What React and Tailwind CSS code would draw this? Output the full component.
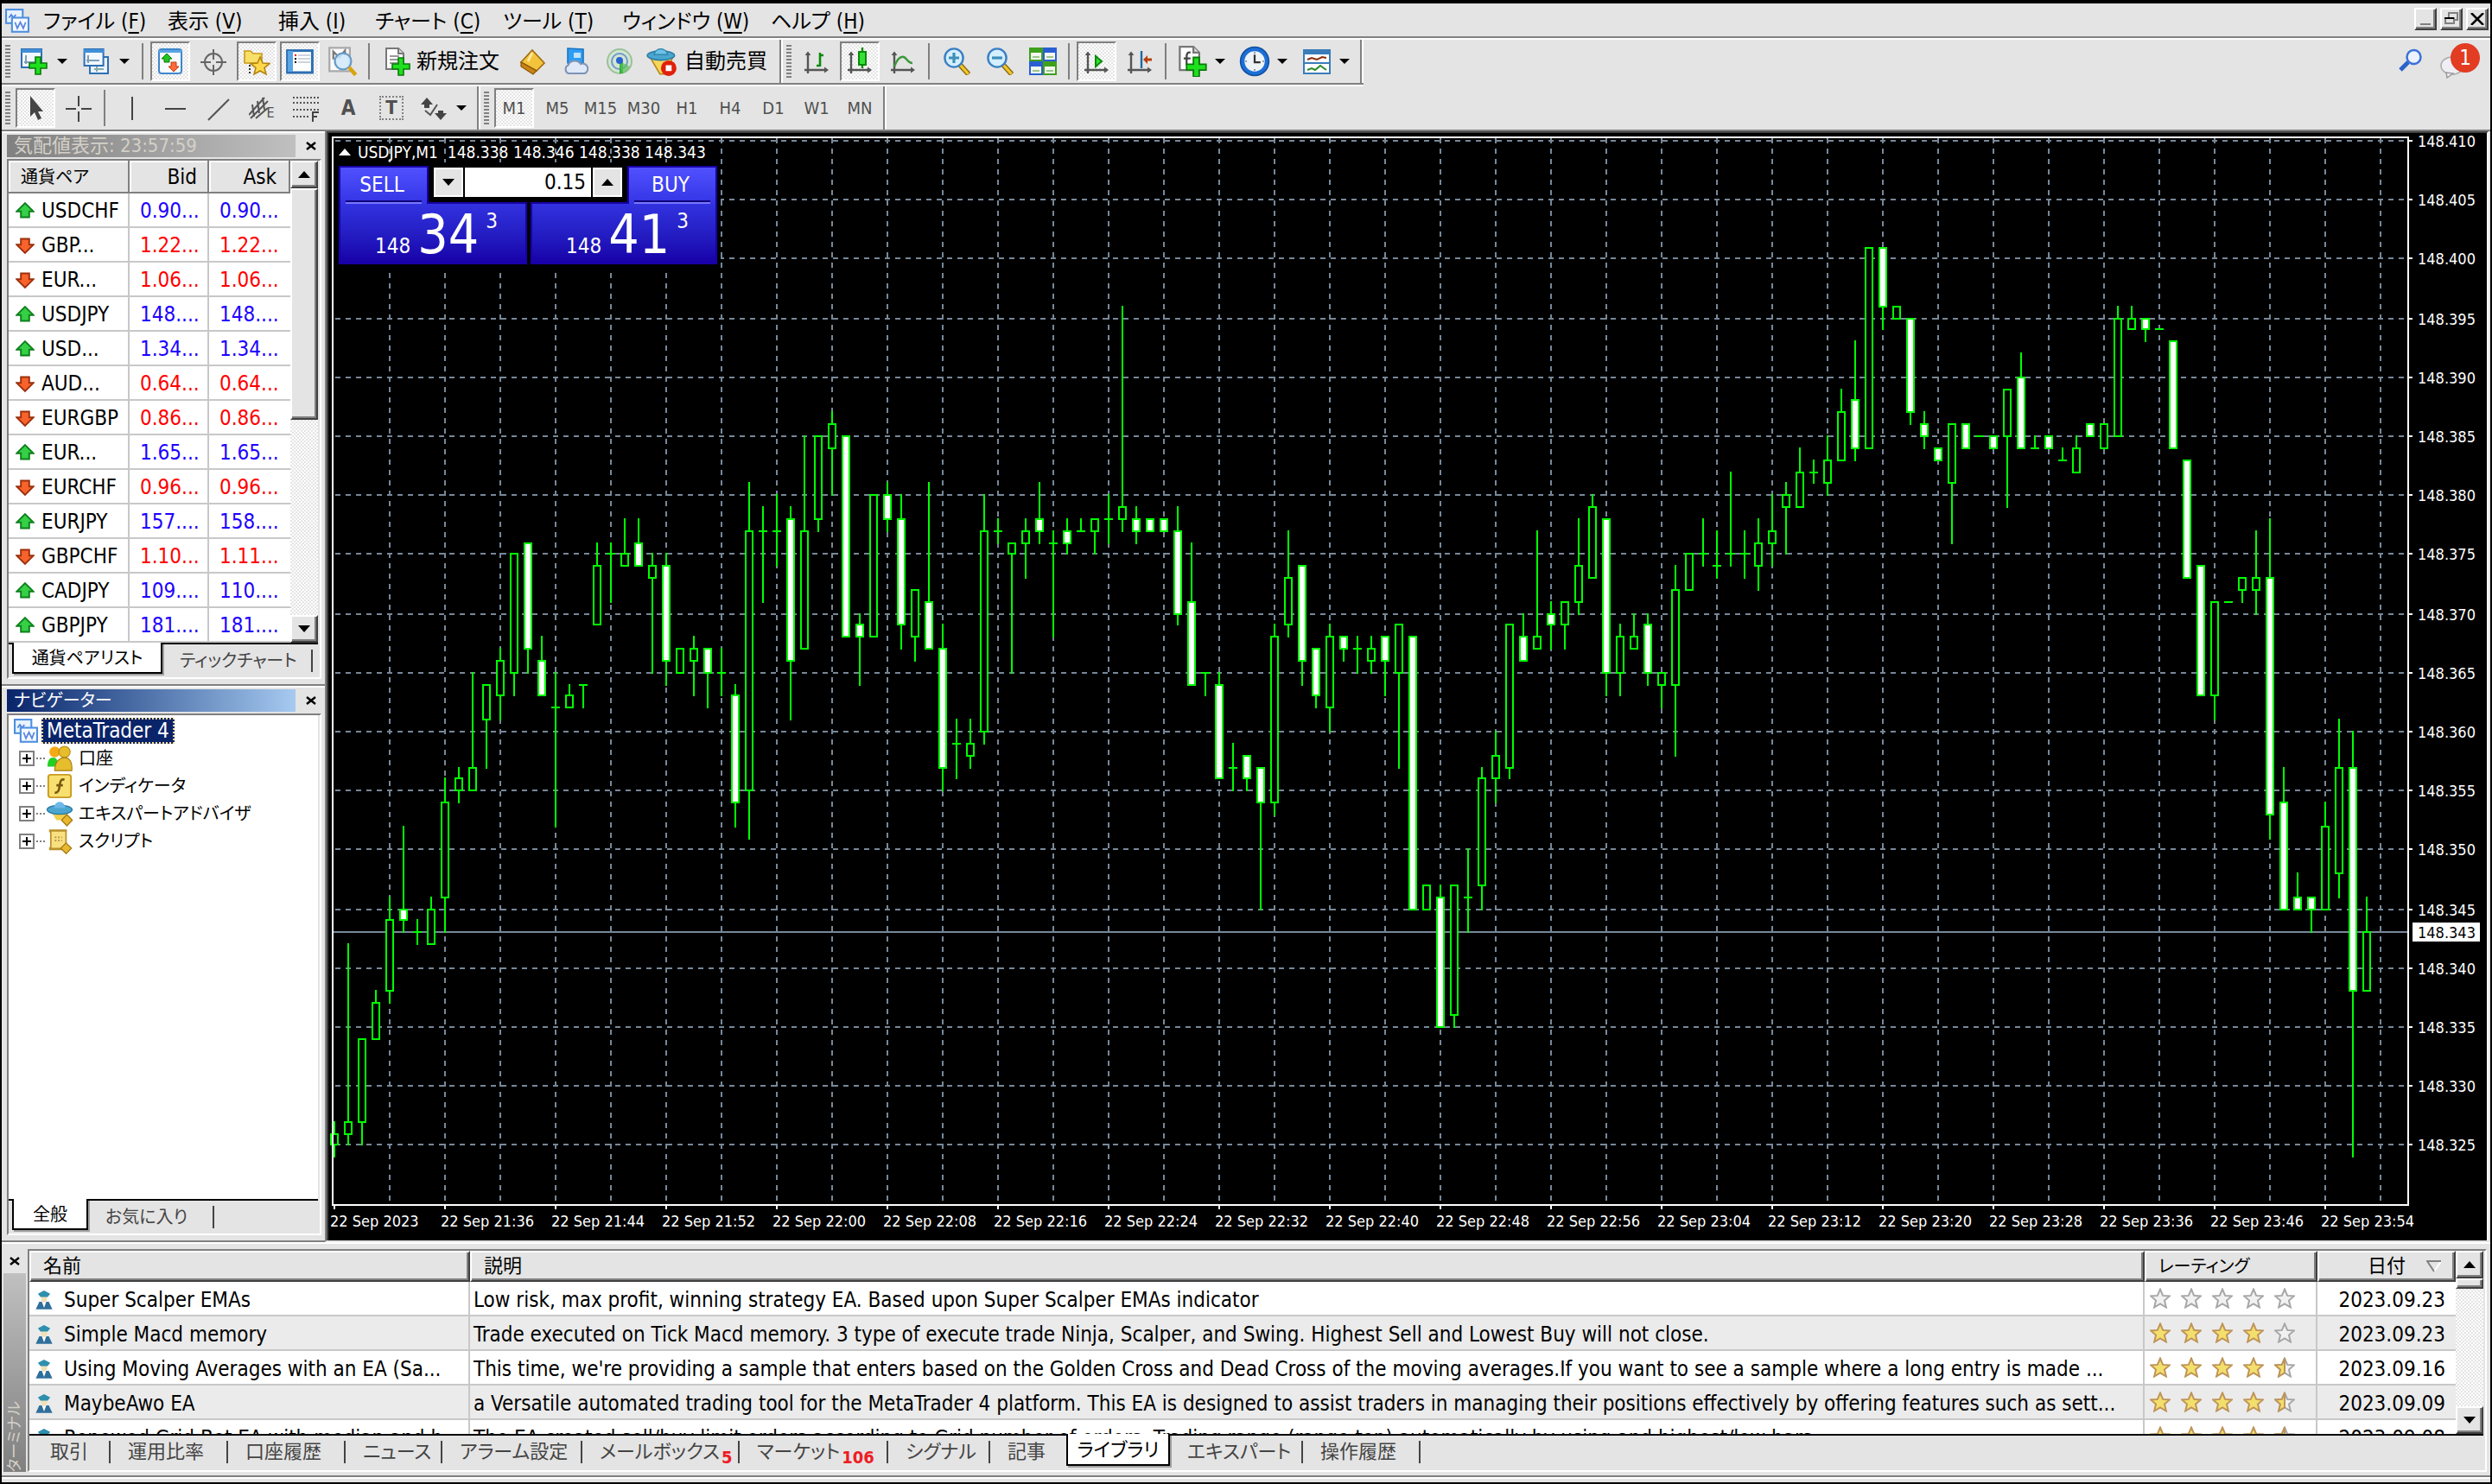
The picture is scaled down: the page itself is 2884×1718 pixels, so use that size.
import React, { useState } from 'react';

const menus = [
  { label: 'ファイル', hotKey: 'F', width: 'w-[144px]' },
  { label: '表示', hotKey: 'V', width: 'w-[128px]' },
  { label: '挿入', hotKey: 'I', width: 'w-[112px]' },
  { label: 'チャート', hotKey: 'C', width: 'w-[148px]' },
  { label: 'ツール', hotKey: 'T', width: 'w-[138px]' },
  { label: 'ウィンドウ', hotKey: 'W', width: 'w-[172px]' },
  { label: 'ヘルプ', hotKey: 'H', width: 'w-[120px]' },
];

const periods = ['M1', 'M5', 'M15', 'M30', 'H1', 'H4', 'D1', 'W1', 'MN'];

const symbols = [
  { name: 'USDCHF', bid: '0.90...', ask: '0.90...', up: true },
  { name: 'GBP...', bid: '1.22...', ask: '1.22...', up: false },
  { name: 'EUR...', bid: '1.06...', ask: '1.06...', up: false },
  { name: 'USDJPY', bid: '148....', ask: '148....', up: true },
  { name: 'USD...', bid: '1.34...', ask: '1.34...', up: true },
  { name: 'AUD...', bid: '0.64...', ask: '0.64...', up: false },
  { name: 'EURGBP', bid: '0.86...', ask: '0.86...', up: false },
  { name: 'EUR...', bid: '1.65...', ask: '1.65...', up: true },
  { name: 'EURCHF', bid: '0.96...', ask: '0.96...', up: false },
  { name: 'EURJPY', bid: '157....', ask: '158....', up: true },
  { name: 'GBPCHF', bid: '1.10...', ask: '1.11...', up: false },
  { name: 'CADJPY', bid: '109....', ask: '110....', up: true },
  { name: 'GBPJPY', bid: '181....', ask: '181....', up: true },
];

const library = [
  { name: 'Super Scalper EMAs', text: 'Low risk, max profit, winning strategy EA. Based upon Super Scalper EMAs indicator', stars: 0, date: '2023.09.23' },
  { name: 'Simple Macd memory', text: 'Trade executed on Tick Macd memory. 3 type of execute trade Ninja, Scalper, and Swing. Highest Sell and Lowest Buy will not close.', stars: 4, date: '2023.09.23' },
  { name: 'Using Moving Averages with an EA (Sa...', text: "This time, we're providing a sample that enters based on the Golden Cross and Dead Cross of the moving averages.If you want to see a sample where a long entry is made ...", stars: 4.5, date: '2023.09.16' },
  { name: 'MaybeAwo EA', text: 'a Versatile automated trading tool for the MetaTrader 4 platform. This EA is designed to assist traders in managing their positions effectively by offering features such as sett...', stars: 4.5, date: '2023.09.09' },
  { name: 'Renewed Grid Bot EA with median and h...', text: 'The EA created sell/buy limit orders according to Grid number of orders. Trading range (range top) automatically by using and highest/low bars ...', stars: 4.5, date: '2023.09.08' },
];

const terminalTabs = [
  { label: '取引', width: 'w-[90px] ml-1' },
  { label: '運用比率', width: 'w-[136px]' },
  { label: '口座履歴', width: 'w-[136px]' },
  { label: 'ニュース', width: 'w-[112px]' },
  { label: 'アラーム設定', width: 'w-[162px]' },
  { label: 'メールボックス', width: 'w-[182px]', count: 5 },
  { label: 'マーケット', width: 'w-[172px]', count: 106 },
  { label: 'シグナル', width: 'w-[118px]' },
  { label: '記事', width: 'w-[88px]' },
  { label: 'ライブラリ', width: 'w-[120px]' },
  { label: 'エキスパート', width: 'w-[154px]' },
  { label: '操作履歴', width: 'w-[136px]' },
];

// open, high, low, close in points above 148.000
const candles = [
  [325, 327, 324, 326], [326, 342, 325, 327], [327, 334, 325, 334], [334, 338, 334, 337],
  [338, 346, 337, 344], [345, 352, 343, 344], [343, 344, 342, 343], [342, 346, 342, 345],
  [346, 356, 343, 354], [355, 357, 354, 356], [355, 365, 355, 357], [361, 364, 357, 364],
  [363, 367, 361, 366], [365, 375, 363, 375], [376, 376, 365, 367], [366, 368, 363, 363],
  [362, 365, 352, 362], [362, 364, 362, 363], [364, 364, 362, 364], [369, 376, 369, 374],
  [375, 376, 371, 375], [374, 378, 374, 375], [376, 378, 374, 374], [373, 375, 365, 374],
  [374, 375, 364, 366], [365, 367, 365, 367], [366, 368, 363, 367], [367, 367, 362, 365],
  [365, 367, 363, 365], [363, 364, 352, 354], [355, 381, 351, 377], [377, 379, 371, 377],
  [377, 380, 374, 377], [378, 379, 361, 366], [367, 385, 367, 377], [378, 385, 377, 385],
  [384, 387, 380, 386], [385, 385, 368, 368], [369, 370, 364, 368], [368, 380, 368, 380],
  [380, 381, 377, 378], [378, 380, 367, 369], [368, 372, 366, 372], [371, 381, 367, 367],
  [367, 369, 355, 357], [359, 361, 356, 359], [358, 361, 357, 359], [360, 380, 359, 377],
  [377, 378, 376, 377], [375, 376, 365, 376], [376, 378, 373, 377], [378, 381, 376, 377],
  [376, 377, 368, 376], [377, 378, 375, 376], [377, 378, 377, 377], [377, 378, 375, 378],
  [378, 380, 376, 378], [378, 396, 377, 379], [378, 379, 376, 377], [378, 378, 377, 377],
  [378, 378, 377, 377], [377, 379, 369, 370], [371, 376, 364, 364], [365, 365, 363, 365],
  [364, 365, 356, 356], [357, 359, 355, 357], [358, 358, 355, 356], [357, 357, 345, 354],
  [354, 369, 353, 368], [369, 377, 368, 373], [374, 374, 364, 366], [367, 367, 362, 363],
  [362, 369, 360, 368], [368, 368, 366, 367], [367, 368, 365, 367], [366, 368, 365, 367],
  [368, 368, 363, 366], [365, 369, 357, 369], [368, 368, 345, 345], [345, 347, 345, 347],
  [346, 347, 335, 335], [336, 347, 335, 347], [346, 350, 343, 346], [347, 357, 345, 356],
  [356, 360, 354, 358], [357, 369, 356, 369], [368, 370, 366, 366], [367, 377, 367, 368],
  [370, 371, 367, 369], [369, 371, 367, 371], [371, 378, 370, 374], [373, 380, 373, 379],
  [378, 378, 363, 365], [365, 369, 363, 368], [367, 370, 367, 368], [369, 370, 364, 365],
  [364, 365, 362, 365], [364, 374, 358, 372], [372, 375, 372, 375], [375, 378, 374, 375],
  [374, 377, 373, 374], [375, 382, 374, 375], [375, 377, 373, 375], [374, 378, 372, 376],
  [376, 380, 374, 377], [379, 381, 375, 380], [379, 384, 379, 382], [382, 383, 381, 382],
  [381, 385, 380, 383], [383, 389, 383, 387], [388, 393, 383, 384], [384, 401, 384, 401],
  [401, 401, 394, 396], [395, 396, 395, 396], [395, 395, 386, 387], [386, 387, 384, 385],
  [384, 384, 383, 383], [381, 386, 376, 386], [386, 386, 384, 384], [385, 385, 385, 385],
  [385, 385, 384, 384], [385, 389, 379, 389], [390, 392, 384, 384], [384, 385, 384, 384],
  [385, 385, 384, 384], [383, 384, 383, 383], [382, 385, 382, 384], [386, 386, 385, 385],
  [384, 386, 384, 386], [385, 396, 385, 395], [394, 396, 394, 395], [395, 395, 393, 394],
  [394, 394, 394, 394], [393, 393, 384, 384], [383, 383, 373, 373], [374, 374, 363, 363],
  [363, 371, 361, 371], [371, 371, 371, 371], [372, 373, 371, 373], [372, 377, 370, 373],
  [373, 378, 351, 353], [354, 357, 345, 345], [346, 348, 345, 345], [346, 346, 343, 345],
  [345, 354, 345, 352], [348, 361, 346, 357], [357, 360, 324, 338], [338, 346, 338, 343],
];

const times = [
  '2023', '21:36', '21:44', '21:52', '22:00', '22:08', '22:16', '22:24', '22:32', '22:40',
  '22:48', '22:56', '23:04', '23:12', '23:20', '23:28', '23:36', '23:46', '23:54',
];

const prices = Array.from({ length: 18 }, (_, i) => 410 - i * 5);

const candleX = (i) => 7 + i * 16;
const priceY = (p) => 9 + Math.round((410 - p) * 6.84) * 2;

/* ---------- small drawings ---------- */

const Svg = ({ children, className = 'w-8 h-8' }) => (
  <svg viewBox="0 0 16 16" className={`${className} shrink-0`} aria-hidden="true">{children}</svg>
);

const Caret = ({ up, big }) => (
  <svg viewBox="0 0 12 6" preserveAspectRatio="none" className={`shrink-0 ${big ? 'w-[14px] h-2' : 'w-3 h-[6px]'}`} aria-hidden="true">
    <path d={up ? 'M0 6L6 0L12 6Z' : 'M0 0H12L6 6Z'} fill="#000" />
  </svg>
);

const Close = () => (
  <svg viewBox="0 0 12 10" className="w-3 h-[10px]" aria-hidden="true">
    <path d="M1 1L11 9M11 1L1 9" stroke="#000" strokeWidth="2.4" />
  </svg>
);

const Plus = ({ x = 5, y = 6 }) => (
  <path
    d={`M${x + 3.5} ${y}h3v3.5h3.5v3h-3.5v3.5h-3v-3.5h-3.5v-3h3.5z`}
    fill="#1ee01e" stroke="#0a7a0a" strokeWidth="0.8"
  />
);

const LogoIcon = () => (
  <Svg className="w-7 h-7">
    <rect x="0.6" y="0.6" width="11" height="9" fill="#e8f3ff" stroke="#4f8fe0" strokeWidth="1.2" />
    <path d="M2.5 6L4 4L5.5 6L7 4" stroke="#4f80e0" fill="none" />
    <rect x="4.5" y="6" width="10.9" height="9.3" fill="#f4faff" stroke="#4f8fe0" strokeWidth="1.2" />
    <path d="M6.5 9L8 13L10 9L12 13L13.5 9" stroke="#5b86e0" fill="none" />
  </Svg>
);

const Axes = ({ children }) => (
  <Svg>
    <path d="M3 15V3M1 13H14" stroke="#555" strokeWidth="1.2" fill="none" />
    <path d="M1.3 4.5L3 2.2L4.7 4.5ZM12.5 11.3L15 13L12.5 14.7Z" fill="#555" />
    {children}
  </Svg>
);

const NewChartIcon = () => (
  <Svg className="w-9 h-8">
    <rect x="0.5" y="1" width="11.5" height="10.5" fill="#f2f8ff" stroke="#2d6fb3" />
    <path d="M0.5 1H12V3H0.5Z" fill="#3f8fd8" />
    <path d="M3 4.5V9.5M2 8.5H9" stroke="#7f9fb8" />
    <Plus x={5} y={5.5} />
  </Svg>
);

const WindowsIcon = () => (
  <Svg className="w-9 h-8">
    <rect x="4" y="5.5" width="10.5" height="9.5" fill="#eaf3fb" stroke="#2d6fb3" />
    <path d="M6.5 12.5H12M8 10.5V14" stroke="#8aa" />
    <rect x="0.8" y="1" width="11" height="9.5" fill="#f2f8ff" stroke="#2d6fb3" />
    <path d="M0.5 1H12V3H0.5Z" fill="#3f8fd8" />
    <path d="M3 4.5V9M2 7.5H9.5" stroke="#7f9fb8" />
  </Svg>
);

const MarketWatchIcon = () => (
  <Svg>
    <rect x="1.5" y="1" width="13" height="14" rx="1.5" fill="#f7fbff" stroke="#3f86cc" />
    <path d="M1.5 1.5H14.5V3H1.5Z" fill="#5aa5e4" />
    <path d="M6 3.5L9 6.5H7.5V8.5H4.5V6.5H3Z" fill="#1fc41f" stroke="#0a7a0a" strokeWidth="0.5" />
    <path d="M10 14L7 11H8.5V8.5H11.5V11H13Z" fill="#ff6a3a" stroke="#c23a10" strokeWidth="0.5" />
  </Svg>
);

const TargetIcon = () => (
  <Svg>
    <circle cx="8" cy="8.5" r="5" fill="none" stroke="#666" />
    <path d="M8 1V7M8 10V16M0.5 8.5H6.5M9.5 8.5H15.5" stroke="#666" />
  </Svg>
);

const NavigatorIcon = () => (
  <Svg>
    <path d="M1 2H4.5L6 3.5H11V9H1Z" fill="#f8df6a" stroke="#c79a1c" strokeWidth="0.8" />
    <path d="M4 10V16" stroke="#333" strokeDasharray="1 1" />
    <path d="M10 5.5L11.5 9L15.5 9.3L12.5 11.8L13.5 15.5L10 13.5L6.5 15.5L7.5 11.8L4.5 9.3L8.5 9Z" fill="#ffd94a" stroke="#b58410" strokeWidth="0.8" />
  </Svg>
);

const TerminalIcon = () => (
  <Svg>
    <rect x="0.8" y="1.8" width="14.4" height="12.7" fill="#fff" stroke="#2d6fb3" strokeWidth="1.5" />
    <path d="M1 2H4V14H1Z" fill="#5aa5e4" />
    <path d="M7 4.5H14M7 6.5H14M7 8.5H14" stroke="#9ab" strokeWidth="0.6" />
    <path d="M5 4.5H6" stroke="#e00" /><path d="M5 6.5H6M5 8.5H6" stroke="#000" />
  </Svg>
);

const TesterIcon = () => (
  <Svg className="w-9 h-9">
    <path d="M1 1H11.5V13H1Z" fill="#fafafa" stroke="#a9a9a9" />
    <path d="M3 7V3L6 6L9 2.5V5" stroke="#777" fill="none" />
    <circle cx="8" cy="8" r="4.2" fill="#cfe8fb" fillOpacity="0.85" stroke="#6a9cc8" />
    <path d="M11 11L14.5 15" stroke="#d9a410" strokeWidth="2" />
  </Svg>
);

const Page = () => (
  <>
    <path d="M1.5 0.5H8.5L11.5 3.5V12.5H1.5Z" fill="#fff" stroke="#777" />
    <path d="M8.5 0.5V3.5H11.5" fill="#ddd" stroke="#777" />
  </>
);

const NewOrderIcon = () => (
  <Svg className="w-8 h-9">
    <Page />
    <path d="M3.5 5H9M3.5 7H9M3.5 9H8" stroke="#999" />
    <Plus x={5} y={6} />
  </Svg>
);

const GoldIcon = () => (
  <Svg>
    <path d="M7.5 1.5L14.5 9L10 13.5L1 8.5Z" fill="#f3c33c" stroke="#a06a10" strokeWidth="0.8" />
    <path d="M1 8.5L10 13.5L8 15.5L1 11Z" fill="#c98414" stroke="#8a5608" strokeWidth="0.6" />
    <path d="M7.5 3L5 8" stroke="#ffe9a0" strokeWidth="1.4" />
  </Svg>
);

const CloudIcon = () => (
  <Svg>
    <path d="M3 0.5L12 1V9H3Z" fill="#2e9df2" stroke="#1b74c4" strokeWidth="0.8" />
    <path d="M6.5 3H10.5V6H6.5Z" fill="#bfe3ff" />
    <path d="M3.5 15A2.6 2.6 0 0 1 3.3 10.2A4 3.6 0 0 1 10.5 9.5A2.8 2.8 0 0 1 12.8 15Z" fill="#dfe8f6" stroke="#7d93b8" />
  </Svg>
);

const SignalIcon = () => (
  <Svg>
    <circle cx="8" cy="8" r="7" fill="#d3e6d3" stroke="#9cc09c" />
    <circle cx="8" cy="8" r="4.5" fill="none" stroke="#6e9ac8" />
    <path d="M8 8H10V15H8Z" fill="#2faa2f" />
    <path d="M8 8L14 11A7 7 0 0 1 9 15Z" fill="#58c058" fillOpacity="0.7" />
    <circle cx="8" cy="7.5" r="2" fill="#2a62d0" />
  </Svg>
);

const AutoTradeIcon = () => (
  <Svg className="w-9 h-9">
    <path d="M2 6L7 14.5H10L13.5 6Z" fill="#f7d75a" stroke="#b88a1a" strokeWidth="0.7" />
    <ellipse cx="7.5" cy="5" rx="7" ry="2.4" fill="#4aa5cf" stroke="#2b7da6" strokeWidth="0.7" />
    <path d="M4 4.5A3.6 3.8 0 0 1 11 4.5Z" fill="#6cc2e6" stroke="#2b7da6" strokeWidth="0.6" />
    <circle cx="11.5" cy="11.5" r="4" fill="#e0200c" />
    <rect x="10" y="10" width="3" height="3" fill="#fff" />
  </Svg>
);

const ZoomIcon = ({ plus }) => (
  <Svg>
    <path d="M10 10L15 15.5" stroke="#8a6a10" strokeWidth="3" />
    <path d="M10 10L14.8 15.3" stroke="#f2c52c" strokeWidth="1.6" />
    <circle cx="6.5" cy="6" r="5.3" fill="#d4efff" stroke="#3a7fc4" strokeWidth="1.2" />
    <path d={plus ? 'M6.5 3V9M3.5 6H9.5' : 'M3.5 6H9.5'} stroke="#3d8fb8" strokeWidth="1.6" />
  </Svg>
);

const TilesIcon = () => (
  <Svg>
    <path d="M0 0H8V8H0Z" fill="#3fa01c" /><path d="M8 0H16V8H8Z" fill="#2a5fd4" />
    <path d="M0 8H8V16H0Z" fill="#2a5fd4" /><path d="M8 8H16V16H8Z" fill="#3fa01c" />
    <path d="M1 3H7V7H1ZM9 3H15V7H9ZM1 11H7V15H1ZM9 11H15V15H9Z" fill="#f4f8f0" />
    <path d="M2 5.5H6M10 5.5H14M2 13.5H6M10 13.5H14" stroke="#9bc58a" />
  </Svg>
);

const IndicatorsIcon = () => (
  <Svg className="w-9 h-9">
    <Page />
    <path d="M7 3.5C5 3 5 5 5 6V10M3.5 6.5H7" stroke="#444" fill="none" />
    <Plus x={5} y={6} />
  </Svg>
);

const ClockIcon = () => (
  <Svg className="w-9 h-9">
    <circle cx="8" cy="8" r="7.3" fill="#1c6fd6" stroke="#0f4fa0" strokeWidth="0.7" />
    <circle cx="8" cy="8" r="5.2" fill="#eef3f8" />
    <path d="M8 3.2V4M8 12V12.800M3.200 8H4M12 8H12.800" stroke="#777" strokeWidth="0.7" />
    <path d="M8 4.5V8.5H11" stroke="#333" fill="none" />
  </Svg>
);

const TemplateIcon = () => (
  <Svg className="w-9 h-8">
    <rect x="0.5" y="1.5" width="15" height="13.5" fill="#fff" stroke="#3a7cba" />
    <path d="M0.5 1.5H15.5V4H0.5ZM0.5 8.5H15.5V9.5H0.5Z" fill="#3a7cba" />
    <path d="M2.5 7L5 6L8 7L11 5.5L13.5 6" stroke="#8a2a0a" fill="none" />
    <path d="M2.5 13L5 12L7 13L10 10.5L13.5 13" stroke="#2a8a2a" fill="none" />
  </Svg>
);

const ExpertIcon = () => (
  <Svg className="w-[22px] h-[24px]">
    <path d="M1 15.8L4 9.5H12L15 15.8Z" fill="#2f6f9c" />
    <path d="M6 9L8 14.5L10 9Z" fill="#fff" />
    <path d="M5.5 4.5H10.5V8.5L8 10.5L5.5 8.5Z" fill="#f0e0b8" />
    <path d="M2.8 2.8L8 0L13.2 2.8L11 5.5H5Z" fill="#2e8fae" />
  </Svg>
);

const StarIcon = ({ fill }) => {
  const d = 'M8 1L10.1 5.9L15.3 6.3L11.3 9.7L12.6 15L8 12.2L3.4 15L4.7 9.7L0.7 6.3L5.9 5.9Z';
  return (
    <Svg className="w-6 h-6">
      <path d={d} fill={fill === 1 ? '#f3df6c' : '#f1f1f1'} stroke={fill === 1 ? '#bf9458' : '#a6a6a6'} strokeWidth="1.3" />
      {fill === 0.5 && (
        <path d="M8 1V12.2L3.4 15L4.7 9.7L0.7 6.3L5.9 5.9Z" fill="#f3df6c" stroke="#bf9458" strokeWidth="1.3" />
      )}
    </Svg>
  );
};

const DirectionIcon = ({ up }) => (
  <Svg className="w-[22px] h-[22px]">
    {up
      ? <path d="M8 1.5L15 8.5H11.5V13.5H4.5V8.5H1Z" fill="#35d045" stroke="#0d7f1c" strokeWidth="1.4" />
      : <path d="M8 14.5L15 7.5H11.5V2.5H4.5V7.5H1Z" fill="#f8632c" stroke="#9c2f0c" strokeWidth="1.4" />}
  </Svg>
);

/* ---------- shared controls ---------- */

const Gripper = () => (
  <div className="w-[6px] h-[38px] ml-1 mr-[6px] shrink-0 bg-[repeating-linear-gradient(#808080_0_2px,#e4e4e4_2px_4px)]" />
);

const Divider = () => <div className="w-[2px] h-[42px] ml-[2px] mr-2 shrink-0 bg-[#808080]" />;

const hatch = 'bg-[conic-gradient(#fff_25%,#e4e4e4_0_50%,#fff_0_75%,#e4e4e4_0)] bg-[length:4px_4px]';
const raised = 'bg-[#e4e4e4] border-2 border-t-white border-l-white border-b-[#404040] border-r-[#404040] shadow-[inset_-2px_-2px_0_#808080]';

const ToolButton = ({ label, pressed, children }) => (
  <button
    type="button"
    aria-label={label}
    aria-pressed={pressed}
    className={`w-[46px] h-[46px] mr-1 shrink-0 flex items-center justify-center text-[20px] text-[#505050] border-2 ${
      pressed ? `border-t-[#808080] border-l-[#808080] border-b-white border-r-white ${hatch}` : 'border-transparent'
    }`}
  >
    {children}
  </button>
);

const DropButton = ({ label, children }) => (
  <button type="button" aria-label={label} className="w-[68px] h-[46px] mr-1 pl-1 shrink-0 flex items-center gap-2">
    {children}
    <Caret />
  </button>
);

const Strip = ({ label, children }) => (
  <div
    role="toolbar"
    aria-label={label}
    className="flex items-center h-[50px] border-r-2 border-[#808080] shadow-[2px_0_0_#fff] mr-[2px]"
  >
    {children}
  </div>
);

const TitleBar = ({ title, active }) => (
  <div className="flex items-center mt-[2px] mb-[2px]">
    <h2
      className={`w-[334px] h-[26px] pl-2 leading-[26px] whitespace-nowrap bg-gradient-to-r ${
        active ? 'text-[20px] from-[#0a246a] to-[#a6caf0] text-white' : 'text-[22px] from-[#808080] to-[#c0c0c0] text-[#d4d0c8]'
      }`}
    >
      {title}
    </h2>
    <button type="button" aria-label="閉じる" className="ml-3"><Close /></button>
  </div>
);

const Scrollbar = ({ thumb }) => (
  <div className={`w-8 shrink-0 flex flex-col ${hatch}`}>
    <button type="button" aria-label="上へ" className={`h-8 flex items-center justify-center shrink-0 ${raised}`}><Caret up big /></button>
    <div className={`${thumb} ${raised}`} />
    <button type="button" aria-label="下へ" className={`h-8 mt-auto flex items-center justify-center shrink-0 ${raised}`}><Caret big /></button>
  </div>
);

const PanelTabs = ({ active, activeWidth, other, otherWidth }) => (
  <div role="tablist" className="h-[38px] flex items-start text-[20px]">
    <button
      type="button"
      role="tab"
      aria-selected="true"
      className={`${activeWidth} h-9 ml-1 -mt-[2px] pt-[2px] relative bg-white border-x-2 border-b-2 border-black shadow-[2px_2px_0_#a0a0a0]`}
    >
      {active}
    </button>
    <button type="button" role="tab" aria-selected="false" className={`${otherWidth} h-[26px] mt-[6px] flex items-center pl-5 border-r-2 border-[#444] text-[#444] whitespace-nowrap`}>
      {other}
    </button>
  </div>
);

const Panel = ({ title, active, tabs, grow, children }) => (
  <section className={`border-t-2 border-[#808080] ${grow ? 'flex-1 flex flex-col border-b-2' : ''}`}>
    <div className={`border-t-2 border-white pl-[6px] pr-1 pb-[6px] ${grow ? 'flex-1 flex flex-col' : ''}`}>
      <TitleBar title={title} active={active} />
      <div className={`border-l-2 border-t-2 border-l-[#808080] border-t-[#808080] border-r-2 border-b-2 border-r-white border-b-white pr-[2px] ${grow ? 'flex-1 flex flex-col' : ''}`}>
        {children}
        <div className="h-[2px] bg-black" />
        {tabs}
      </div>
    </div>
  </section>
);

/* ---------- bars ---------- */

const MenuBar = () => (
  <header className="h-[42px] flex items-center border-b-2 border-white shadow-[inset_0_-2px_0_#808080]">
    <div className="ml-1 mr-4"><LogoIcon /></div>
    <nav className="flex pt-[2px] text-[24px]">
      {menus.map((m) => (
        <button key={m.hotKey} type="button" className={`${m.width} text-left whitespace-nowrap`}>
          {m.label} (<u className="underline-offset-4 decoration-2">{m.hotKey}</u>)
        </button>
      ))}
    </nav>
    <div className="ml-auto mr-[2px] mb-1 flex gap-1">
      <button type="button" aria-label="最小化" className={`w-[26px] h-[26px] flex items-end justify-center pb-1 ${raised}`}>
        <svg viewBox="0 0 12 2" className="w-3 h-[2px]"><path d="M0 1H12" stroke="#808080" strokeWidth="2" /></svg>
      </button>
      <button type="button" aria-label="元に戻す" className={`w-[26px] h-[26px] flex items-center justify-center ${raised}`}>
        <svg viewBox="0 0 18 18" className="w-[18px] h-[18px]">
          <path d="M6 7V2H16V10H12" fill="none" stroke="#808080" strokeWidth="2" />
          <path d="M2 8H12V14H2Z" fill="none" stroke="#808080" strokeWidth="2" />
          <path d="M1 8H12" stroke="#000" strokeWidth="2" />
        </svg>
      </button>
      <button type="button" aria-label="閉じる" className={`w-[26px] h-[26px] flex items-center justify-center ${raised}`}>
        <svg viewBox="0 0 16 14" className="w-4 h-[14px]"><path d="M1 0L15 14M15 0L1 14" stroke="#000" strokeWidth="2.5" /></svg>
      </button>
    </div>
  </header>
);

const StandardBar = () => (
  <div className="flex items-start h-[54px]">
    <div className="flex border-b-2 border-[#808080] shadow-[0_2px_0_#fff]">
      <Strip label="標準">
        <Gripper />
        <DropButton label="新規チャート"><NewChartIcon /></DropButton>
        <DropButton label="チャートの組表示"><WindowsIcon /></DropButton>
        <Divider />
        <ToolButton label="気配値表示" pressed><MarketWatchIcon /></ToolButton>
        <ToolButton label="データウィンドウ"><TargetIcon /></ToolButton>
        <ToolButton label="ナビゲーター" pressed><NavigatorIcon /></ToolButton>
        <ToolButton label="ターミナル" pressed><TerminalIcon /></ToolButton>
        <ToolButton label="ストラテジーテスター"><TesterIcon /></ToolButton>
        <Divider />
        <button type="button" className="w-[154px] h-[46px] mr-1 pl-2 flex items-center gap-[6px] text-[24px] whitespace-nowrap">
          <NewOrderIcon />新規注文
        </button>
        <ToolButton label="メタエディター"><GoldIcon /></ToolButton>
        <ToolButton label="仮想ホスティング"><CloudIcon /></ToolButton>
        <ToolButton label="シグナル"><SignalIcon /></ToolButton>
        <button type="button" className="w-[150px] h-[46px] mr-2 pl-1 flex items-center gap-2 text-[24px] whitespace-nowrap">
          <AutoTradeIcon />自動売買
        </button>
      </Strip>
      <Strip label="チャート">
        <Gripper />
        <ToolButton label="バーチャート">
          <Axes><path d="M10 3V11M8 10.5H10M10 4.5H12" stroke="#0a8a0a" strokeWidth="1.3" /></Axes>
        </ToolButton>
        <ToolButton label="ローソク足" pressed>
          <Axes>
            <path d="M9.5 0V12" stroke="#0a8a0a" strokeWidth="1.2" />
            <rect x="7.5" y="2.5" width="4" height="7.5" fill="#35e035" stroke="#0a8a0a" />
          </Axes>
        </ToolButton>
        <ToolButton label="ラインチャート">
          <Axes><path d="M3 11C5 6 7 5 8.5 5.5S11 9 13.5 9" fill="none" stroke="#3a9a3a" strokeWidth="1.2" /></Axes>
        </ToolButton>
        <Divider />
        <ToolButton label="ズームイン"><ZoomIcon plus /></ToolButton>
        <ToolButton label="ズームアウト"><ZoomIcon /></ToolButton>
        <ToolButton label="整列"><TilesIcon /></ToolButton>
        <Divider />
        <ToolButton label="自動スクロール" pressed>
          <Axes><path d="M7.5 5V11L11 8Z" fill="#35e035" stroke="#0a8a0a" /></Axes>
        </ToolButton>
        <ToolButton label="チャートシフト">
          <Axes>
            <path d="M9 2V12" stroke="#1c6aa8" strokeWidth="1.2" />
            <path d="M10 7L12.5 4.5V6.3H15V7.7H12.5V9.5Z" fill="#b8400c" />
          </Axes>
        </ToolButton>
        <Divider />
        <DropButton label="インディケータ"><IndicatorsIcon /></DropButton>
        <DropButton label="時間足"><ClockIcon /></DropButton>
        <DropButton label="定型チャート"><TemplateIcon /></DropButton>
      </Strip>
    </div>
    <button type="button" aria-label="検索" className="ml-auto mt-[10px]">
      <svg viewBox="0 0 28 28" className="w-7 h-7">
        <path d="M2 25L11 16" stroke="#2a62c8" strokeWidth="5" />
        <circle cx="17.5" cy="10" r="8" fill="#eef2ff" stroke="#3a72d8" strokeWidth="2.5" />
      </svg>
    </button>
    <button type="button" aria-label="通知" className="relative ml-5 mr-3 mt-1 w-[46px] h-[42px]">
      <svg viewBox="0 0 46 42" className="w-[46px] h-[42px]">
        <ellipse cx="14" cy="26" rx="13" ry="10" fill="#eeeef4" stroke="#aaa" strokeWidth="1.5" />
        <path d="M7 34L8 40L15 35Z" fill="#eeeef4" stroke="#999" strokeWidth="1.5" />
        <circle cx="29" cy="17" r="17" fill="#e23c22" />
      </svg>
      <span className="absolute left-[12px] top-0 w-[34px] leading-[34px] text-center text-[24px] text-white">1</span>
    </button>
  </div>
);

const LineStudies = () => (
  <div className="flex items-center h-[50px]">
    <Strip label="ライン等">
      <Gripper />
      <ToolButton label="カーソル" pressed>
        <Svg><path d="M5 1V13L7.5 10.5L9.5 15L11.5 14L9.5 10H12.5Z" fill="#444" /></Svg>
      </ToolButton>
      <ToolButton label="クロスヘア">
        <Svg><path d="M8 1V7M8 10V16M0.5 8.5H6.5M9.5 8.5H15.5" stroke="#444" /></Svg>
      </ToolButton>
      <Divider />
      <ToolButton label="垂直線"><Svg><path d="M8 1.5V15" stroke="#444" /></Svg></ToolButton>
      <ToolButton label="水平線"><Svg><path d="M2 8.5H14" stroke="#444" /></Svg></ToolButton>
      <ToolButton label="トレンドライン"><Svg><path d="M2 15L14 3" stroke="#555" /></Svg></ToolButton>
      <ToolButton label="チャネル">
        <span className="flex items-end text-[16px] leading-4">
          <svg viewBox="0 0 12 14" className="w-6 h-7"><path d="M0 11L9 1M1 13L11 3M4 13L11 7M2 5L3 12M5 3L6 10M8 1L9 8" stroke="#555" fill="none" /></svg>
          <b className="-ml-1 font-normal">E</b>
        </span>
      </ToolButton>
      <ToolButton label="フィボナッチ">
        <Svg>
          <path d="M1 2H16M1 5H16M1 9H16M1 13H10" stroke="#555" strokeDasharray="1 1" />
          <path d="M12.5 16V10.5H16M12.5 13H15" stroke="#444" fill="none" />
        </Svg>
      </ToolButton>
      <ToolButton label="テキスト"><span className="text-[24px] font-bold">A</span></ToolButton>
      <ToolButton label="テキストラベル">
        <span className="w-7 h-7 leading-6 text-[22px] font-bold border-2 border-dotted border-[#808080]">T</span>
      </ToolButton>
      <DropButton label="矢印">
        <Svg className="w-9 h-8">
          <path d="M4 2L7.5 6H5.5V8H2.5V6H0.5ZM12 15L15.5 11H13.5V9.5H10.5V11H8.5Z" fill="#444" />
          <path d="M3 9.5L6 12L10 6" stroke="#555" fill="none" />
        </Svg>
      </DropButton>
    </Strip>
    <Strip label="時間足">
      <Gripper />
      {periods.map((p) => (
        <ToolButton key={p} label={p} pressed={p === 'M1'}>{p}</ToolButton>
      ))}
    </Strip>
  </div>
);

/* ---------- left column ---------- */

const watchHead = 'h-[38px] p-0 pt-[2px] font-normal border-b-2 border-r-2 border-[#808080] shadow-[inset_2px_2px_0_#fff]';

const MarketWatch = () => (
  <Panel
    title="気配値表示: 23:57:59"
    tabs={<PanelTabs active="通貨ペアリスト" activeWidth="w-[174px]" other="ティックチャート" otherWidth="w-[174px]" />}
  >
    <div className="flex">
      <table className="flex-1 table-fixed border-separate border-spacing-0 bg-white text-[24px]">
        <colgroup><col className="w-[140px]" /><col className="w-[92px]" /><col /></colgroup>
        <thead>
          <tr className="bg-[#e4e4e4]">
            <th className={`${watchHead} pl-[14px] text-left text-[20px]`}>通貨ペア</th>
            <th className={`${watchHead} pr-[12px] text-right`}>Bid</th>
            <th className={`${watchHead} pr-[14px] text-right`}>Ask</th>
          </tr>
        </thead>
        <tbody>
          {symbols.map((s, i) => (
            <tr key={i}>
              <td className="h-10 p-0 pt-[2px] pl-2 border-b-2 border-r-2 border-[#c8c8c8]">
                <div className="flex items-center gap-2"><DirectionIcon up={s.up} />{s.name}</div>
              </td>
              <td className={`p-0 pt-[2px] pl-3 border-b-2 border-r-2 border-[#c8c8c8] ${s.up ? 'text-[#2000ff]' : 'text-[#ff0000]'}`}>{s.bid}</td>
              <td className={`p-0 pt-[2px] pl-3 border-b-2 border-[#c8c8c8] ${s.up ? 'text-[#2000ff]' : 'text-[#ff0000]'}`}>{s.ask}</td>
            </tr>
          ))}
        </tbody>
      </table>
      <Scrollbar thumb="h-[268px]" />
    </div>
  </Panel>
);

const treeItems = [
  {
    label: '口座',
    icon: (
      <>
        <circle cx="5" cy="4" r="3.3" fill="#f5a914" /><circle cx="11" cy="4" r="3.5" fill="#e6bd2c" stroke="#b98a10" strokeWidth="0.6" />
        <path d="M0.5 13C0.5 9 2 7.5 4 7.5S7 9 7 13Z" fill="#22d022" />
        <path d="M5 15.5C5 10 8 7.5 11 7.5S16 10 15.5 15.5Z" fill="#e6bd2c" stroke="#a67c10" strokeWidth="0.6" />
      </>
    ),
  },
  {
    label: 'インディケータ',
    icon: (
      <>
        <rect x="1" y="1" width="14" height="14" rx="1.5" fill="#f8e070" stroke="#c99a20" />
        <path d="M11 4C8.5 3.5 8.3 5.5 8 8S7 12.5 5 12M6 7.5H10" stroke="#7a5a10" strokeWidth="1.4" fill="none" />
      </>
    ),
  },
  {
    label: 'エキスパートアドバイザ',
    icon: (
      <>
        <path d="M3 7L6 12H11L13 7Z" fill="#f3cf4c" />
        <ellipse cx="8" cy="5.5" rx="7.7" ry="2.8" fill="#4aa5cf" stroke="#2577a0" strokeWidth="0.7" />
        <path d="M4.5 4.5A3.5 3.8 0 0 1 11.5 4.5Z" fill="#6cb8e8" />
        <path d="M12.5 8.5L15.8 12L12.5 15.5L9.2 12Z" fill="#e8b830" stroke="#a67c10" strokeWidth="0.7" />
      </>
    ),
  },
  {
    label: 'スクリプト',
    icon: (
      <>
        <path d="M1.5 1.5H12.5M3 2V12M11.5 2V12M1.5 12.5H10" stroke="#b8902a" strokeWidth="1.8" />
        <path d="M3 2H11.5V12H3Z" fill="#f8e080" /><path d="M5 5.5H9.5M5 7.5H9.5" stroke="#b09040" strokeDasharray="1 1" />
        <path d="M12 9L15.3 12.3L12 15.6L8.7 12.3Z" fill="#e8b830" stroke="#a67c10" strokeWidth="0.7" />
      </>
    ),
  },
];

const Navigator = () => (
  <Panel
    title="ナビゲーター"
    active
    grow
    tabs={<PanelTabs active="全般" activeWidth="w-[88px]" other="お気に入り" otherWidth="w-[146px]" />}
  >
    <div className="flex-1 bg-white pt-[2px] leading-[30px]">
      <div className="flex items-center h-8 pl-[6px] gap-1 text-[24px]">
        <LogoIcon />
        <span className="px-[6px] bg-[#0a246a] text-white outline-2 -outline-offset-2 outline-dotted outline-[#f5db95] whitespace-nowrap">MetaTrader 4</span>
      </div>
      <ul className="text-[20px]">
        {treeItems.map((t) => (
          <li key={t.label} className="flex items-center h-8 pl-3 whitespace-nowrap">
            <button type="button" aria-label="展開" className="w-[18px] h-[18px] flex items-center justify-center border-2 border-[#808080] bg-white">
              <svg viewBox="0 0 10 10" className="w-[10px] h-[10px]"><path d="M5 0V10M0 5H10" stroke="#000" strokeWidth="2" /></svg>
            </button>
            <span className="w-[10px] ml-[2px] border-t-2 border-dotted border-[#808080]" />
            <Svg className="w-[34px] h-[30px]">{t.icon}</Svg>
            <span className="ml-[5px]">{t.label}</span>
          </li>
        ))}
      </ul>
    </div>
  </Panel>
);

/* ---------- chart ---------- */

const Candle = ({ i, data }) => {
  const [open, high, low, close] = data;
  const x = candleX(i);
  const top = priceY(Math.max(open, close));
  const bottom = priceY(Math.min(open, close));
  return (
    <g fill="#00ff00">
      <rect x={x - 1} y={priceY(high) - 1} width="2" height={priceY(low) - priceY(high) + 2} />
      <rect x={x - 5} y={top - 1} width="10" height={bottom - top + 2} />
      {bottom > top && (
        <rect x={x - 3} y={top + 1} width="6" height={bottom - top - 2} fill={open > close ? '#ffffff' : '#000000'} />
      )}
    </g>
  );
};

const PriceChart = () => (
  <svg viewBox="0 0 2498 1282" className="block w-full h-auto bg-black" shapeRendering="crispEdges" role="img" aria-label="USDJPY M1">
    <g stroke="#778899" strokeWidth="2" strokeDasharray="6 6">
      {prices.map((p) => <line key={p} x1="8" x2="2406" y1={priceY(p)} y2={priceY(p)} />)}
      {Array.from({ length: 37 }, (_, i) => (
        <line key={i} x1={71 + i * 64} x2={71 + i * 64} y1="6" y2="1240" />
      ))}
    </g>
    <line x1="6" x2="2406" y1={priceY(343)} y2={priceY(343)} stroke="#778899" strokeWidth="2" />
    {candles.map((c, i) => <Candle key={i} i={i} data={c} />)}
    <path d="M5 1241V5H2407V1241Z" fill="none" stroke="#fff" strokeWidth="2" />
    <g fill="#fff" fontSize="18">
      {times.map((t, i) => (
        <g key={t}>
          <rect x={candleX(i * 8) - 1} y="1242" width="2" height="4" />
          <text x={candleX(i * 8) - 5} y="1266">22 Sep {t}</text>
        </g>
      ))}
      {prices.map((p) => (
        <g key={p}>
          <rect x="2408" y={priceY(p) - 1} width="4" height="2" />
          <text x="2418" y={priceY(p) + 7}>148.{p}</text>
        </g>
      ))}
      <rect x="2412" y={priceY(343) - 11} width="78" height="22" />
      <text x="2418" y={priceY(343) + 7} fill="#000">148.343</text>
    </g>
  </svg>
);

const QuoteButton = ({ side, pips, mirrored }) => (
  <button type="button" className={`flex flex-col text-white ${mirrored ? 'w-[216px] items-end' : 'w-[218px] items-start'}`}>
    <span className="relative w-[104px] h-[44px] -mb-[2px] px-[6px] border-x-2 border-t-2 border-[#1800a8] bg-gradient-to-b from-[#5050ff] to-[#3434e4]">
      <span className="block h-[40px] leading-[40px] pr-1 text-[24px] text-center border-b-2 border-[#10007c] shadow-[0_2px_0_#7878ff]">{side}</span>
    </span>
    <span className="w-full h-[72px] pl-2 flex items-end justify-center gap-2 pb-1 border-2 border-[#1800a8] bg-gradient-to-b from-[#3232e0] to-[#1800a8]">
      <span className="text-[24px] leading-[30px]">148</span>
      <span className="text-[62px] leading-[56px]">{pips}</span>
      <span className="text-[24px] leading-6 self-start mt-2">3</span>
    </span>
  </button>
);

const ChartWindow = () => {
  const [volume, setVolume] = useState('0.15');

  return (
    <main className="relative flex-1 min-w-0 border-l-2 border-t-2 border-[#808080] border-b-2 border-b-[#e4e4e4]">
      <div className="border-l-2 border-t-2 border-[#404040] border-r-2 border-r-white mr-[2px]">
        <PriceChart />
      </div>
      <div className="absolute left-[14px] top-3 flex items-center gap-2 text-[19px] leading-6 text-white whitespace-pre">
        <svg viewBox="0 0 14 8" className="w-[14px] h-2"><path d="M0 8L7 0L14 8Z" fill="#fff" /></svg>
        USDJPY,M1  148.338 148.346 148.338 148.343
      </div>
      <div className="absolute left-2 top-9 w-[448px] h-[126px] pt-1 pl-[6px] bg-black">
        <div className="flex gap-1">
          <QuoteButton side="SELL" pips="34" />
          <QuoteButton side="BUY" pips="41" mirrored />
        </div>
      </div>
      <div className="absolute left-[122px] top-[40px] h-[38px] w-[222px] p-[2px] flex gap-[2px] bg-black">
        <button type="button" aria-label="減らす" className="w-[34px] flex items-center justify-center bg-[#e4e4e4] border-2 border-white"><Caret big /></button>
        <input
          aria-label="数量"
          value={volume}
          onChange={(e) => setVolume(e.target.value)}
          className="flex-1 min-w-0 px-[6px] text-right text-[24px] bg-white text-black outline-none"
        />
        <button type="button" aria-label="増やす" className="w-[34px] flex items-center justify-center bg-[#e4e4e4] border-2 border-white"><Caret up big /></button>
      </div>
    </main>
  );
};

/* ---------- terminal ---------- */

const headCell = 'h-9 p-0 text-left font-normal border-t-2 border-l-2 border-t-white border-l-white border-r-2 border-r-[#404040] border-b-2 border-b-[#404040] shadow-[inset_-2px_-2px_0_#808080]';
const bodyCell = 'h-10 p-0 border-b-2 border-r-2 border-[#c8c8c8] whitespace-nowrap overflow-hidden';

const Terminal = () => (
  <section className="border-t-2 border-white">
    <div className="flex pt-[6px] pb-1 pr-1">
      <div className="w-[26px] ml-[2px] mr-[2px] flex flex-col items-center">
        <button type="button" aria-label="閉じる" className="h-7 flex items-center"><Close /></button>
        <div className="w-full h-[230px] flex items-end bg-gradient-to-b from-[#c0c0c0] to-[#808080]">
          <span className="pt-2 text-[#d4d0c8] text-[18px] leading-[26px] whitespace-nowrap [writing-mode:sideways-lr]">ターミナル</span>
        </div>
      </div>
      <div className="flex-1 min-w-0 border-2 border-t-[#808080] border-l-[#808080] border-r-white border-b-white pr-[2px]">
        <div className="h-[212px] flex overflow-hidden">
          <div className="flex-1 min-w-0 overflow-hidden">
            <table className="w-full table-fixed border-separate border-spacing-0 text-[24px]">
              <colgroup>
                <col className="w-[510px]" /><col /><col className="w-[200px]" /><col className="w-[160px]" />
              </colgroup>
              <thead>
                <tr className="bg-[#e4e4e4] text-[22px]">
                  <th className={headCell}><span className="pl-[14px]">名前</span></th>
                  <th className={headCell}><span className="pl-[14px]">説明</span></th>
                  <th className={headCell}><span className="pl-[14px] text-[20px]">レーティング</span></th>
                  <th className={headCell}>
                    <div className="flex items-center justify-end gap-6 pr-[14px]">
                      日付
                      <svg viewBox="0 0 18 14" className="w-[18px] h-[14px]">
                        <path d="M17 1L9 13" stroke="#fff" strokeWidth="2" />
                        <path d="M9 13L1 1H17" fill="none" stroke="#808080" strokeWidth="2" />
                      </svg>
                    </div>
                  </th>
                </tr>
              </thead>
              <tbody>
                {library.map((row, i) => (
                  <tr key={row.name} className={i % 2 ? 'bg-[#ebebeb]' : 'bg-white'}>
                    <td className={bodyCell}>
                      <div className="flex items-center gap-3 pl-[6px] pt-1"><ExpertIcon />{row.name}</div>
                    </td>
                    <td className={bodyCell}><div className="pl-1 pt-1">{row.text}</div></td>
                    <td className={bodyCell}>
                      <div className="flex gap-3 pl-[6px]">
                        {[0, 1, 2, 3, 4].map((n) => (
                          <StarIcon key={n} fill={Math.max(0, Math.min(1, row.stars - n))} />
                        ))}
                      </div>
                    </td>
                    <td className="h-10 p-0 border-b-2 border-[#c8c8c8]"><div className="pt-1 pr-3 text-right">{row.date}</div></td>
                  </tr>
                ))}
              </tbody>
            </table>
          </div>
          <Scrollbar thumb="h-3" />
        </div>
        <div className="h-[2px] bg-black" />
        <div role="tablist" className="h-10 flex items-start text-[22px]">
          {terminalTabs.map((t, i) => {
            const active = t.label === 'ライブラリ';
            return (
              <button
                key={t.label}
                type="button"
                role="tab"
                aria-selected={active}
                className={`${t.width} shrink-0 flex whitespace-nowrap ${
                  active
                    ? 'h-[37px] -mt-[2px] justify-center pt-1 relative bg-white border-x-2 border-b-2 border-black shadow-[2px_2px_0_#a0a0a0]'
                    : 'h-[26px] mt-[6px] pl-[20px] items-center text-[#444]'
                } ${!active && i !== 8 ? 'border-r-2 border-[#444]' : ''}`}
              >
                {t.label}
                {t.count && <b className="ml-[2px] mt-3 text-[20px] leading-5 text-[#ee1c25]">{t.count}</b>}
              </button>
            );
          })}
        </div>
      </div>
    </div>
    <div className="h-2 border-t-2 border-[#808080] shadow-[inset_0_2px_0_#fff]" />
  </section>
);

const App = () => (
  <div className="min-h-screen bg-black pt-1 px-[2px] pb-[2px] text-black font-['DejaVu_Sans_Condensed','Noto_Sans_CJK_JP',sans-serif] [font-feature-settings:'palt']">
    <div className="bg-[#e4e4e4] leading-[30px]">
      <MenuBar />
      <StandardBar />
      <LineStudies />
      <div className="flex">
        <aside className="w-[374px] shrink-0 flex flex-col">
          <MarketWatch />
          <Navigator />
        </aside>
        <ChartWindow />
      </div>
      <Terminal />
    </div>
  </div>
);

export default App;
